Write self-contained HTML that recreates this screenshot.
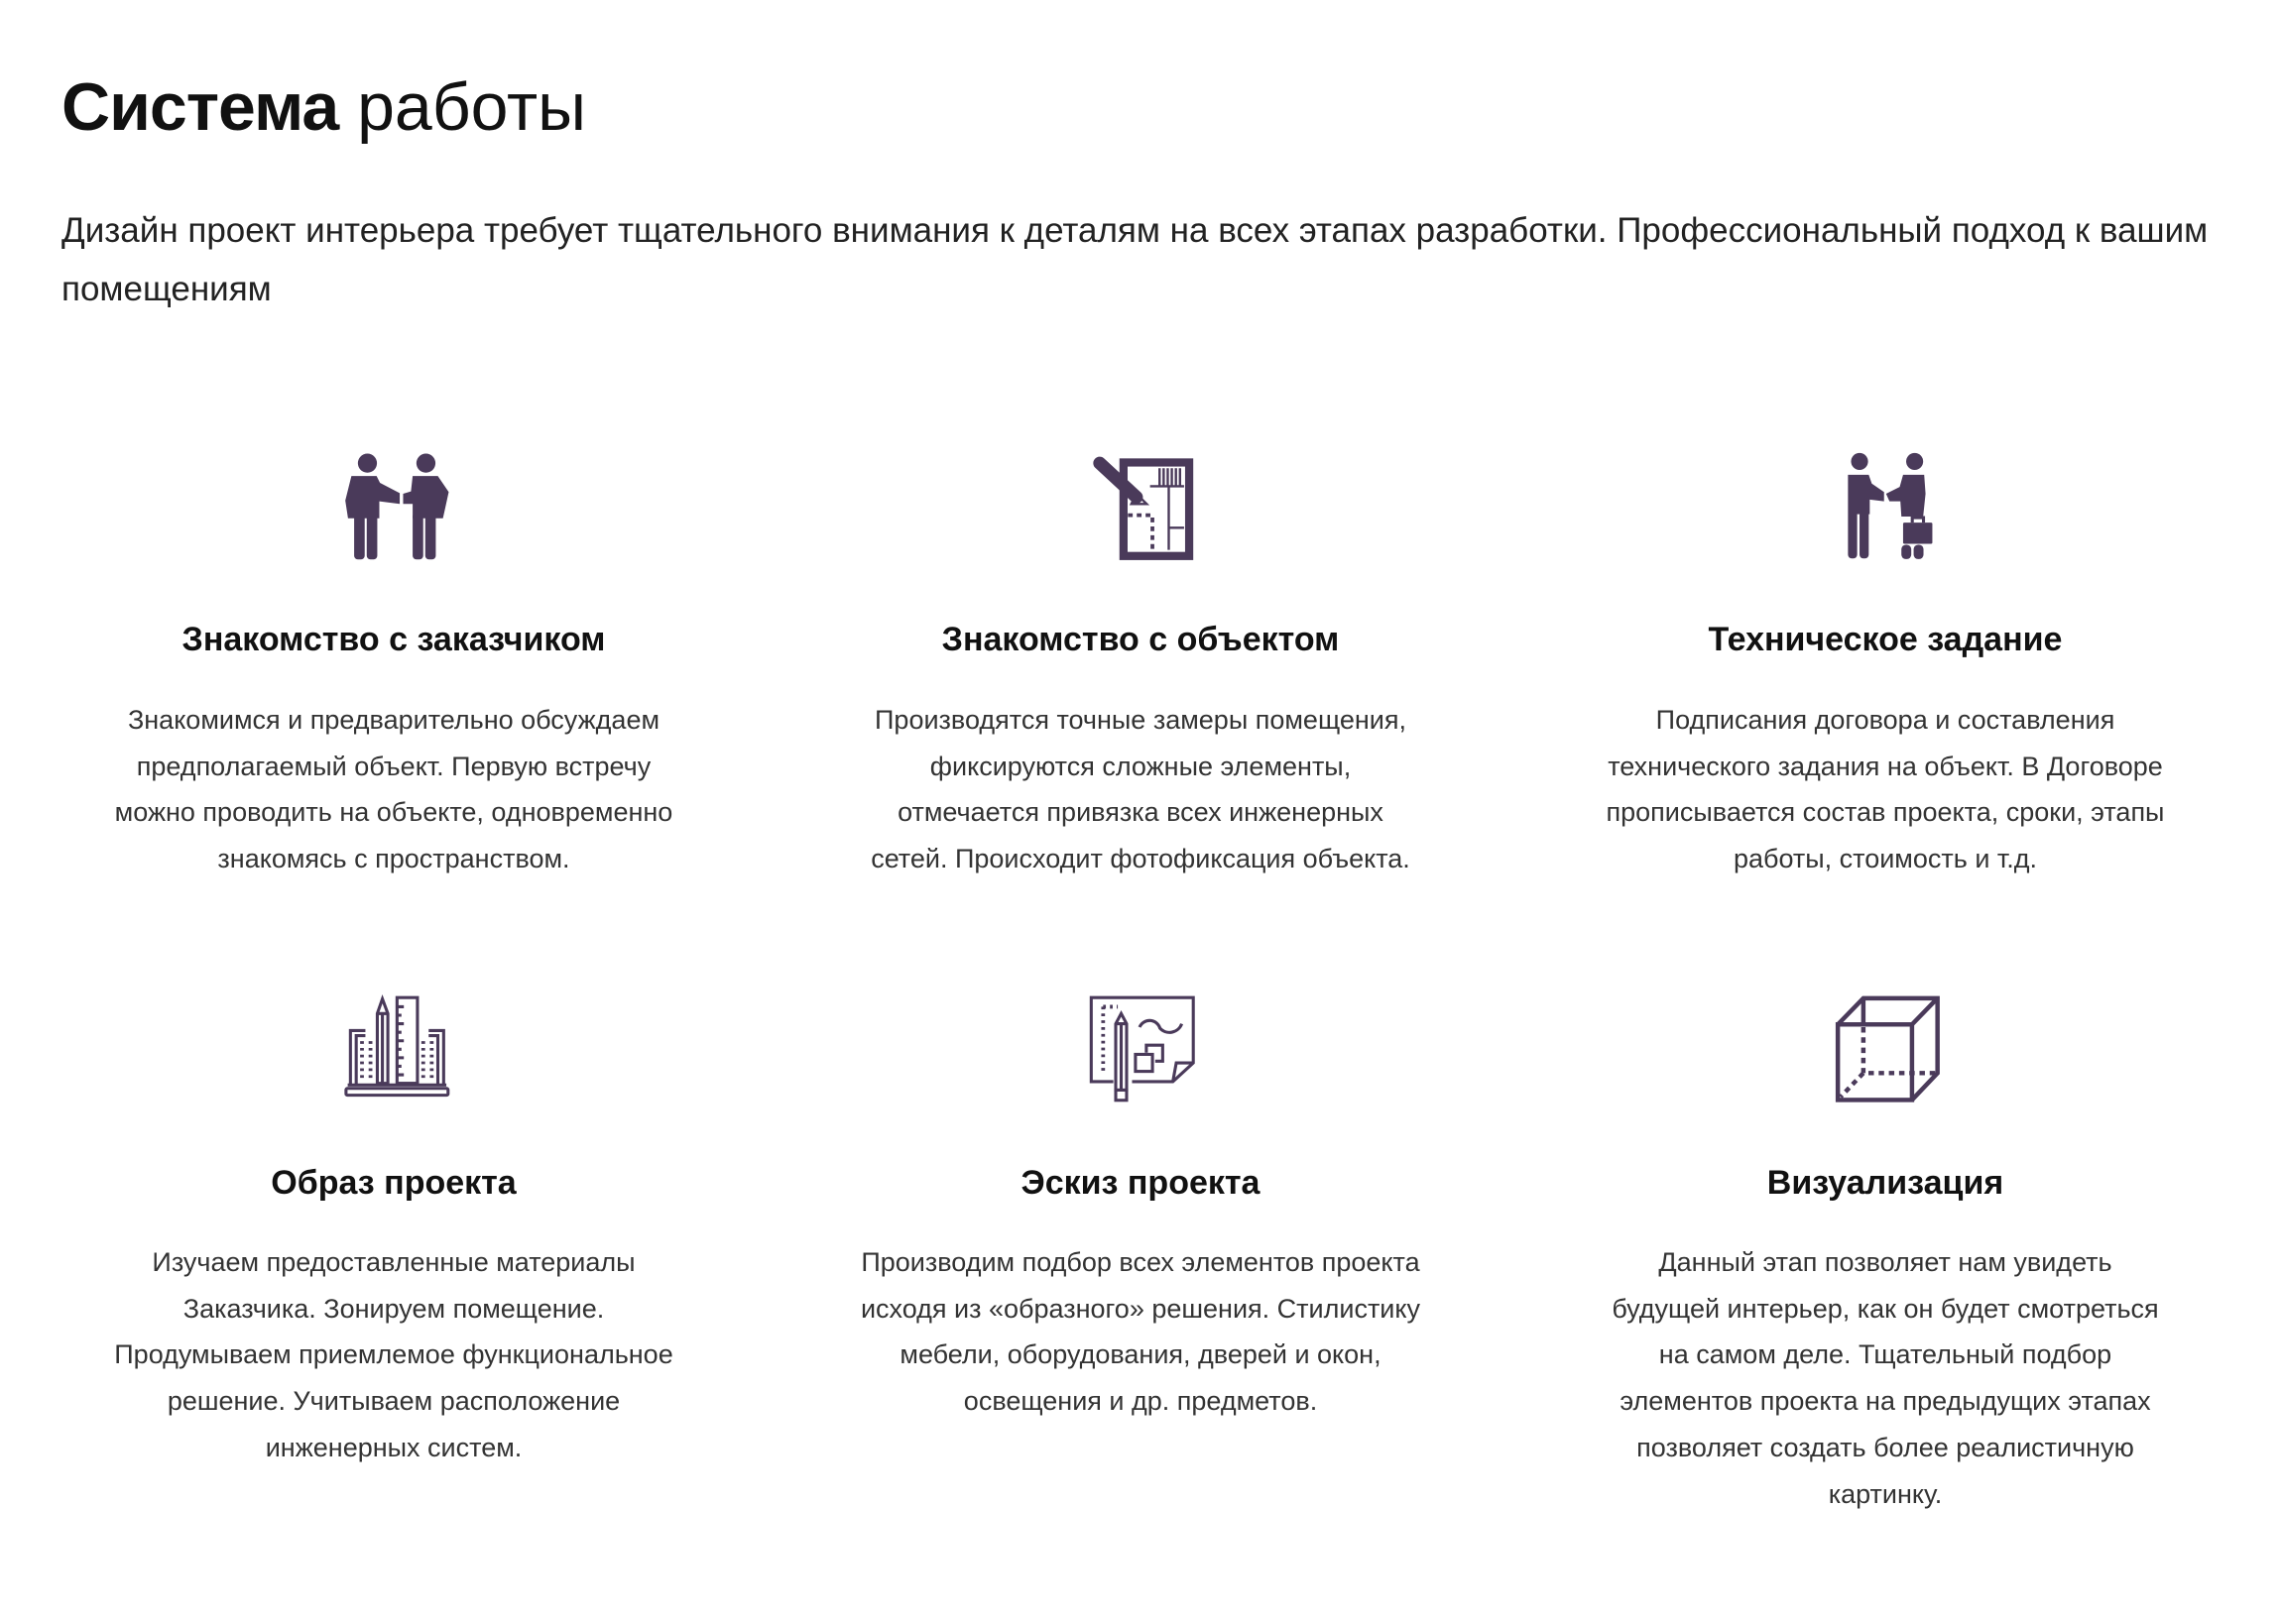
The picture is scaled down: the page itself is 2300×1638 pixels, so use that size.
<!DOCTYPE html>
<html><head><meta charset="utf-8">
<style>
html,body{margin:0;padding:0;background:#fff;width:2300px;height:1638px;overflow:hidden;position:relative;font-family:"Liberation Sans",Arial,sans-serif;}
.t{position:absolute;left:62px;top:68px;font-size:68px;line-height:80px;color:#111;white-space:nowrap;}
.t b{font-weight:bold;letter-spacing:-1px}
.p{position:absolute;left:62px;top:203px;font-size:35px;line-height:59px;color:#222;white-space:nowrap;}
.h{position:absolute;width:800px;text-align:center;font-size:34px;font-weight:bold;color:#111;line-height:40px;white-space:nowrap;}
.d{position:absolute;width:800px;text-align:center;font-size:27px;color:#333;line-height:46.7px;white-space:nowrap;}
svg{position:absolute;}
</style></head><body>
<div class="t"><b>Система</b> работы</div>
<div class="p">Дизайн проект интерьера требует тщательного внимания к деталям на всех этапах разработки. Профессиональный подход к вашим<br>помещениям</div>

<!-- icon 1 -->
<svg style="left:331px;top:450px" width="140" height="130" viewBox="0 0 408 379" fill="#4a3a5a">
<circle cx="115" cy="50" r="28"/><circle cx="287" cy="50" r="28"/>
<path d="M68 88 H142 L152 108 L210 138 V170 L150 162 V212 H58 L50 160 Z"/>
<rect x="76" y="195" width="31" height="138" rx="11"/><rect x="113" y="195" width="31" height="138" rx="11"/>
<path d="M248 88 H322 L354 135 L342 190 L337 212 H248 L248 170 L220 170 V140 L243 133 Z"/>
<rect x="248" y="195" width="31" height="138" rx="11"/><rect x="285" y="195" width="31" height="138" rx="11"/>
</svg>

<!-- icon 2 -->
<svg style="left:1091px;top:450px" width="140" height="130" viewBox="0 0 408 379">
<rect x="122" y="48" width="193" height="275" fill="none" stroke="#4a3a5a" stroke-width="24"/>
<g stroke="#4a3a5a" stroke-width="7" fill="none">
<path d="M200 118 H300 M255 118 V305 M255 240 H300"/>
<path d="M228 65 V118 M240 65 V118 M252 65 V118 M264 65 V118 M276 65 V118 M288 65 V118"/>
<path d="M145 170 L160 140 L190 170 Z"/>
</g>
<g stroke="#4a3a5a" stroke-width="11" stroke-dasharray="14 12" fill="none">
<path d="M135 203 H210 M207 210 V305"/></g>
<path d="M52 50 L160 150" stroke="#4a3a5a" stroke-width="38" stroke-linecap="round"/>
</svg>

<!-- icon 3 -->
<svg style="left:1851px;top:450px" width="140" height="130" viewBox="0 0 408 379" fill="#4a3a5a">
<circle cx="70" cy="45" r="25"/><circle cx="232" cy="45" r="25"/>
<path d="M36 84 H97 L106 110 L142 135 V162 L100 157 V200 H36 Z"/>
<rect x="36" y="190" width="27" height="140" rx="11"/><rect x="70" y="190" width="27" height="140" rx="11"/>
<path d="M198 84 H260 L264 140 L257 207 H193 L190 162 L158 162 L148 140 L188 120 Z"/>
<rect x="198" y="225" width="86" height="62" rx="4"/><path d="M225 225 V210 H258 V225" stroke="#4a3a5a" stroke-width="9" fill="none"/>
<rect x="193" y="290" width="29" height="42" rx="13"/><rect x="229" y="290" width="29" height="42" rx="13"/>
</svg>

<!-- icon 4 -->
<svg style="left:330px;top:1000px" width="140" height="130" viewBox="0 0 408 379" fill="none" stroke="#4a3a5a" stroke-width="9">
<rect x="55" y="285" width="300" height="20" rx="4"/>
<path d="M60 275 H350"/>
<path d="M68 278 V115 H112 M85 278 V130 H112"/>
<path d="M342 278 V115 H298 M325 278 V130 H298"/>
<path d="M147 270 V65 L162 22 L178 65 V270 Z M147 65 H178 M162 65 V270"/>
<rect x="205" y="18" width="60" height="252"/>
<path d="M205 45 H225 M205 70 H218 M205 95 H225 M205 120 H218 M205 145 H225 M205 170 H218 M205 195 H225 M205 220 H218 M205 245 H225"/>
<g stroke-width="11" stroke-dasharray="8 12"><path d="M102 146 V260 M127 146 V260 M282 146 V260 M307 146 V260"/></g>
</svg>

<!-- icon 5 -->
<svg style="left:1090px;top:1000px" width="140" height="130" viewBox="0 0 408 379" fill="none" stroke="#4a3a5a" stroke-width="9">
<path d="M95 265 H30 V18 H330 V210 L270 265 H150"/>
<path d="M330 210 H280 L270 265"/>
<g stroke-width="11" stroke-dasharray="8 12"><path d="M65 45 V240 M65 45 H108"/></g>
<path d="M102 290 V95 L118 65 L134 95 V290 Z M102 95 H134 M118 95 V290"/>
<rect x="102" y="290" width="32" height="30"/>
<path d="M172 105 A32 32 0 0 1 232 108 A38 38 0 0 0 296 95"/>
<rect x="160" y="185" width="50" height="50"/>
<path d="M192 180 V158 H240 V205 H218"/>
</svg>

<!-- icon 6 -->
<svg style="left:1849px;top:1000px" width="140" height="130" viewBox="0 0 408 379" fill="none" stroke="#4a3a5a" stroke-width="13">
<rect x="12" y="97" width="218" height="222"/>
<path d="M12 97 L87 20 H305 V240 L230 319 M230 97 L305 20"/>
<path d="M87 20 V95"/>
<g stroke-dasharray="16 14"><path d="M87 105 V240 H300 M87 240 L20 310"/></g>
</svg>

<div class="h" style="left:-3px;top:625px">Знакомство с заказчиком</div>
<div class="d" style="left:-3px;top:703px">Знакомимся и предварительно обсуждаем<br>предполагаемый объект. Первую встречу<br>можно проводить на объекте, одновременно<br>знакомясь с пространством.</div>

<div class="h" style="left:750px;top:625px">Знакомство с объектом</div>
<div class="d" style="left:750px;top:703px">Производятся точные замеры помещения,<br>фиксируются сложные элементы,<br>отмечается привязка всех инженерных<br>сетей. Происходит фотофиксация объекта.</div>

<div class="h" style="left:1501px;top:625px">Техническое задание</div>
<div class="d" style="left:1501px;top:703px">Подписания договора и составления<br>технического задания на объект. В Договоре<br>прописывается состав проекта, сроки, этапы<br>работы, стоимость и т.д.</div>

<div class="h" style="left:-3px;top:1173px">Образ проекта</div>
<div class="d" style="left:-3px;top:1250px">Изучаем предоставленные материалы<br>Заказчика. Зонируем помещение.<br>Продумываем приемлемое функциональное<br>решение. Учитываем расположение<br>инженерных систем.</div>

<div class="h" style="left:750px;top:1173px">Эскиз проекта</div>
<div class="d" style="left:750px;top:1250px">Производим подбор всех элементов проекта<br>исходя из «образного» решения. Стилистику<br>мебели, оборудования, дверей и окон,<br>освещения и др. предметов.</div>

<div class="h" style="left:1501px;top:1173px">Визуализация</div>
<div class="d" style="left:1501px;top:1250px">Данный этап позволяет нам увидеть<br>будущей интерьер, как он будет смотреться<br>на самом деле. Тщательный подбор<br>элементов проекта на предыдущих этапах<br>позволяет создать более реалистичную<br>картинку.</div>
</body></html>
